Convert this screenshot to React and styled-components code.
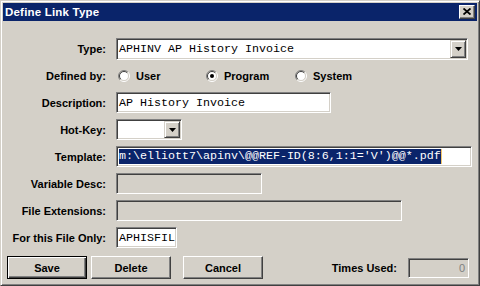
import React from "react";
import styled, { createGlobalStyle } from "styled-components";

const GlobalStyle = createGlobalStyle`
  html, body {
    margin: 0;
    padding: 0;
    background: #d4d0c8;
  }
  * {
    box-sizing: border-box;
  }
`;

const Window = styled.div`
  width: 480px;
  height: 286px;
  display: flex;
  flex-direction: column;
  background: #d4d0c8;
  border: 1px solid;
  border-color: #d4d0c8 #404040 #404040 #d4d0c8;
  box-shadow: inset 1px 1px #ffffff, inset -1px -1px #808080;
  padding: 2px;
  font-family: "Liberation Sans", Arial, sans-serif;
  color: #000;
`;

const TitleBar = styled.div`
  height: 18px;
  background: #0a246a;
  display: flex;
  align-items: center;
  justify-content: space-between;
  padding: 0 2px 0 2px;
`;

const Title = styled.span`
  color: #fff;
  font-weight: bold;
  font-size: 11.5px;
  letter-spacing: 0.2px;
`;

const CloseButton = styled.div`
  width: 16px;
  height: 14px;
  background: #d4d0c8;
  border: 1px solid;
  border-color: #fff #404040 #404040 #fff;
  box-shadow: inset -1px -1px #808080;
  display: flex;
  align-items: center;
  justify-content: center;
  padding-bottom: 1px;
`;

const Body = styled.div`
  flex: 1;
  padding: 17px 8px 0 4px;
  display: flex;
  flex-direction: column;
`;

const Form = styled.div`
  display: grid;
  grid-template-columns: 99px 1fr;
  column-gap: 10px;
  row-gap: 6px;
  grid-auto-rows: 21px;
`;

const Label = styled.div`
  font-size: 11px;
  font-weight: bold;
  text-align: right;
  display: flex;
  align-items: center;
  justify-content: flex-end;
  white-space: nowrap;
`;

const Sunken = styled.div`
  width: ${(p) => p.$w}px;
  height: ${(p) => p.$h || 21}px;
  border: 1px solid;
  border-color: #808080 #ffffff #ffffff #808080;
  box-shadow: inset 1px 1px #404040, inset -1px -1px #d4d0c8;
  background: ${(p) => (p.$disabled ? "#d4d0c8" : "#ffffff")};
  display: flex;
  align-items: center;
  padding: 1px;
  overflow: hidden;
`;

const MonoText = styled.span`
  font-family: "Liberation Mono", "Courier New", monospace;
  font-size: 11.67px;
  white-space: pre;
  padding-left: 1px;
  flex: 1;
`;

const Selected = styled.span`
  display: inline-block;
  background: #0a246a;
  color: #fff;
  line-height: 15px;
`;

const Caret = styled.span`
  display: inline-block;
  width: 1px;
  height: 15px;
  background: #f2c66b;
  vertical-align: top;
`;

const DropButton = styled.div`
  width: 16px;
  height: 100%;
  background: #d4d0c8;
  border: 1px solid;
  border-color: #d4d0c8 #404040 #404040 #d4d0c8;
  box-shadow: inset 1px 1px #ffffff, inset -1px -1px #808080;
  display: flex;
  align-items: center;
  justify-content: center;
`;

const RadioRow = styled.div`
  display: flex;
  align-items: center;
  font-size: 11px;
  font-weight: bold;
`;

const RadioItem = styled.label`
  display: flex;
  align-items: center;
  width: ${(p) => p.$w}px;
  gap: 6px;
  padding-left: 2px;
`;

const ButtonRow = styled.div`
  display: flex;
  align-items: center;
  margin-top: 8px;
`;

const Button = styled.div`
  width: 80px;
  height: 23px;
  margin-left: ${(p) => p.$ml || 0}px;
  background: #d4d0c8;
  border: 1px solid;
  border-color: ${(p) => (p.$default ? "#000" : "#fff #404040 #404040 #fff")};
  box-shadow: ${(p) =>
    p.$default
      ? "inset 1px 1px #fff, inset -1px -1px #404040, inset -2px -2px #808080"
      : "inset -1px -1px #808080"};
  display: flex;
  align-items: center;
  justify-content: center;
  font-size: 11px;
  font-weight: bold;
`;

const TimesLabel = styled(Label)`
  margin-left: auto;
  margin-right: 11px;
`;

const Count = styled.span`
  flex: 1;
  text-align: right;
  padding-right: 2px;
  font-size: 11px;
  color: #808080;
`;

const Radio = ({ checked }) => (
  <svg width="12" height="12" viewBox="0 0 12 12">
    <circle cx="6" cy="6" r="4.5" fill="#fff" />
    <path d="M2.1 9.9 A5.5 5.5 0 0 1 9.9 2.1" stroke="#808080" fill="none" />
    <path d="M9.9 2.1 A5.5 5.5 0 0 1 2.1 9.9" stroke="#ffffff" fill="none" />
    <path d="M2.8 9.2 A4.5 4.5 0 0 1 9.2 2.8" stroke="#404040" fill="none" />
    <path d="M9.2 2.8 A4.5 4.5 0 0 1 2.8 9.2" stroke="#d4d0c8" fill="none" />
    {checked && <circle cx="6" cy="6" r="2" fill="#000" />}
  </svg>
);

const Arrow = () => (
  <svg width="7" height="4" viewBox="0 0 7 4">
    <path d="M0 0 H7 L3.5 4 Z" fill="#000" />
  </svg>
);

const Combo = ({ w, h, children }) => (
  <Sunken $w={w} $h={h}>
    <MonoText>{children}</MonoText>
    <DropButton>
      <Arrow />
    </DropButton>
  </Sunken>
);

const App = () => {
  return (
    <>
      <GlobalStyle />
      <Window>
        <TitleBar>
          <Title>Define Link Type</Title>
          <CloseButton>
            <svg width="8" height="7" viewBox="0 0 8 7">
              <path d="M0.5 0.5 L7.5 6.5 M7.5 0.5 L0.5 6.5" stroke="#000" strokeWidth="1.8" />
            </svg>
          </CloseButton>
        </TitleBar>
        <Body>
          <Form>
            <Label>Type:</Label>
            <Combo w={352} h={22}>APHINV AP History Invoice</Combo>

            <Label>Defined by:</Label>
            <RadioRow>
              <RadioItem $w={88}>
                <Radio />
                User
              </RadioItem>
              <RadioItem $w={89}>
                <Radio checked />
                Program
              </RadioItem>
              <RadioItem $w={90}>
                <Radio />
                System
              </RadioItem>
            </RadioRow>

            <Label>Description:</Label>
            <Sunken $w={215}>
              <MonoText>AP History Invoice</MonoText>
            </Sunken>

            <Label>Hot-Key:</Label>
            <Combo w={66}></Combo>

            <Label>Template:</Label>
            <Sunken $w={356}>
              <MonoText>
                <Selected>m:\elliott7\apinv\@@REF-ID(8:6,1:1='V')@@*.pdf</Selected>
                <Caret />
              </MonoText>
            </Sunken>

            <Label>Variable Desc:</Label>
            <Sunken $w={146} $disabled />

            <Label>File Extensions:</Label>
            <Sunken $w={286} $disabled />

            <Label>For this File Only:</Label>
            <Sunken $w={61}>
              <MonoText>APHISFIL</MonoText>
            </Sunken>
          </Form>
          <ButtonRow>
            <Button $default>Save</Button>
            <Button $ml={4}>Delete</Button>
            <Button $ml={12}>Cancel</Button>
            <TimesLabel>Times Used:</TimesLabel>
            <Sunken $w={61} $h={20} $disabled>
              <Count>0</Count>
            </Sunken>
          </ButtonRow>
        </Body>
      </Window>
    </>
  );
};

export default App;
